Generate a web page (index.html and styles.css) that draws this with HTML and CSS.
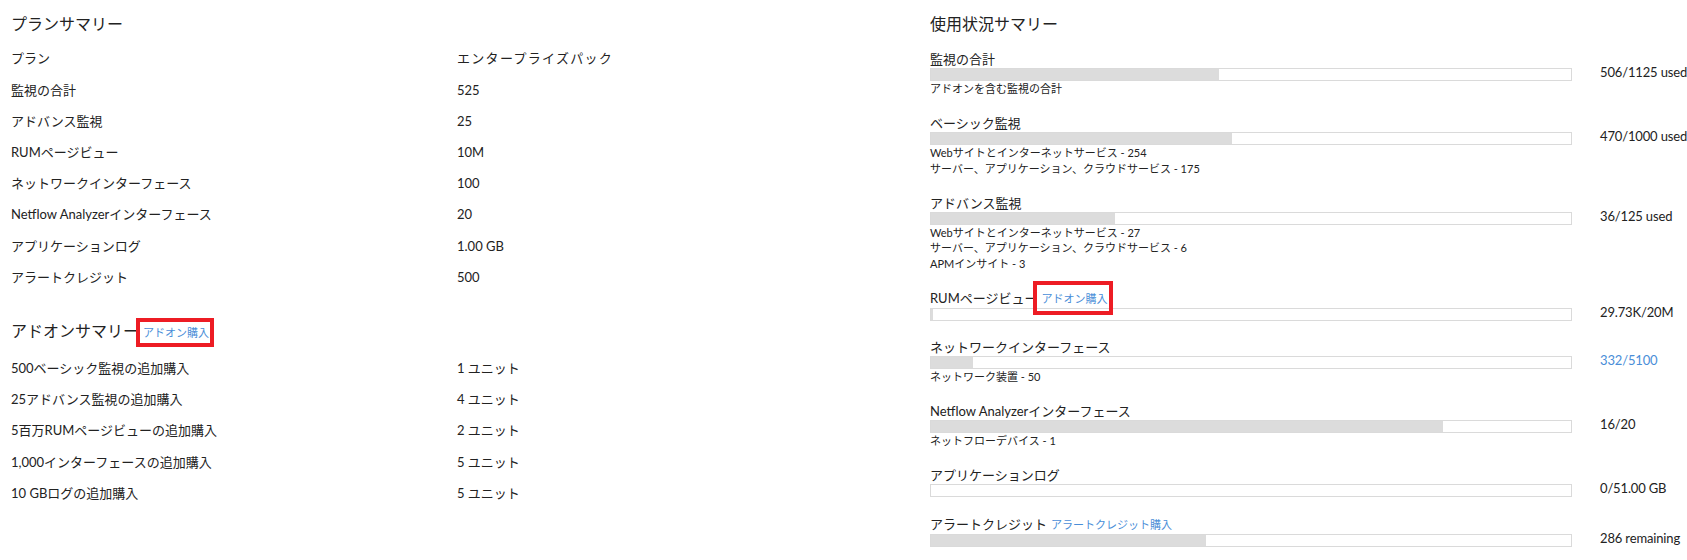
FILE: index.html
```html
<!DOCTYPE html>
<html lang="ja">
<head>
<meta charset="utf-8">
<title>サマリー</title>
<link rel="stylesheet" href="styles.css">
</head>
<body>
<div class="page">
  <section class="plan">
    <h2 class="sec-title">プランサマリー</h2>
    <div class="kv">
      <div class="kv-row"><span>プラン</span><span class="wide">エンタープライズパック</span></div>
      <div class="kv-row"><span>監視の合計</span><span>525</span></div>
      <div class="kv-row"><span>アドバンス監視</span><span>25</span></div>
      <div class="kv-row"><span>RUMページビュー</span><span>10M</span></div>
      <div class="kv-row"><span>ネットワークインターフェース</span><span>100</span></div>
      <div class="kv-row"><span>Netflow Analyzerインターフェース</span><span>20</span></div>
      <div class="kv-row"><span>アプリケーションログ</span><span>1.00 GB</span></div>
      <div class="kv-row"><span>アラートクレジット</span><span>500</span></div>
    </div>
    <h2 class="sec-title addon-title">アドオンサマリー<a class="buy-link marked marked-left">アドオン購入</a></h2>
    <div class="kv kv-addon">
      <div class="kv-row"><span>500ベーシック監視の追加購入</span><span>1 ユニット</span></div>
      <div class="kv-row"><span>25アドバンス監視の追加購入</span><span>4 ユニット</span></div>
      <div class="kv-row"><span>5百万RUMページビューの追加購入</span><span>2 ユニット</span></div>
      <div class="kv-row"><span>1,000インターフェースの追加購入</span><span>5 ユニット</span></div>
      <div class="kv-row"><span>10 GBログの追加購入</span><span>5 ユニット</span></div>
    </div>
  </section>

  <section class="usage">
    <h2 class="sec-title">使用状況サマリー</h2>
    <div class="u-list">
      <div class="u-item">
        <div class="u-title">監視の合計</div>
        <div class="bar"><div class="fill" style="width:44.98%"></div></div>
        <div class="u-value">506/1125 used</div>
        <div class="u-subs"><div>アドオンを含む監視の合計</div></div>
      </div>
      <div class="u-item">
        <div class="u-title">ベーシック監視</div>
        <div class="bar"><div class="fill" style="width:47%"></div></div>
        <div class="u-value">470/1000 used</div>
        <div class="u-subs">
          <div>Webサイトとインターネットサービス - 254</div>
          <div>サーバー、アプリケーション、クラウドサービス - 175</div>
        </div>
      </div>
      <div class="u-item">
        <div class="u-title">アドバンス監視</div>
        <div class="bar"><div class="fill" style="width:28.8%"></div></div>
        <div class="u-value">36/125 used</div>
        <div class="u-subs">
          <div>Webサイトとインターネットサービス - 27</div>
          <div>サーバー、アプリケーション、クラウドサービス - 6</div>
          <div>APMインサイト - 3</div>
        </div>
      </div>
      <div class="u-item">
        <div class="u-title">RUMページビュー<a class="buy-link marked marked-right">アドオン購入</a></div>
        <div class="bar"><div class="fill" style="width:0.25%"></div></div>
        <div class="u-value">29.73K/20M</div>
      </div>
      <div class="u-item">
        <div class="u-title">ネットワークインターフェース</div>
        <div class="bar"><div class="fill" style="width:6.5%"></div></div>
        <div class="u-value u-value-link">332/5100</div>
        <div class="u-subs"><div>ネットワーク装置 - 50</div></div>
      </div>
      <div class="u-item">
        <div class="u-title">Netflow Analyzerインターフェース</div>
        <div class="bar"><div class="fill" style="width:80%"></div></div>
        <div class="u-value">16/20</div>
        <div class="u-subs"><div>ネットフローデバイス - 1</div></div>
      </div>
      <div class="u-item">
        <div class="u-title">アプリケーションログ</div>
        <div class="bar"><div class="fill" style="width:0%"></div></div>
        <div class="u-value">0/51.00 GB</div>
      </div>
      <div class="u-item">
        <div class="u-title">アラートクレジット<a class="buy-link">アラートクレジット購入</a></div>
        <div class="bar"><div class="fill" style="width:43%"></div></div>
        <div class="u-value">286 remaining</div>
      </div>
    </div>
  </section>
</div>
</body>
</html>
```

FILE: styles.css
```css
html, body {
  margin: 0;
  padding: 0;
  background: #ffffff;
}

body {
  font-family: Lato, "Noto Sans CJK JP", sans-serif;
  color: #222222;
  font-size: 13px;
}

.page {
  display: grid;
  grid-template-columns: 919px 642px 1fr;
  padding-left: 11px;
}

.usage {
  grid-column: 2 / 4;
}

.sec-title {
  font-size: 16px;
  font-weight: normal;
  line-height: 22px;
  margin: 13px 0 0;
  color: #222222;
}

.kv {
  margin-top: 8.4px;
}

.kv-row {
  display: grid;
  grid-template-columns: 446px 1fr;
  font-size: 13px;
  line-height: 17px;
  padding: 7.1px 0;
}

.wide {
  letter-spacing: 1.3px;
}

.addon-title {
  margin-top: 27px;
}

.kv-addon {
  margin-top: 9px;
}

.buy-link {
  font-size: 11px;
  color: #4a8ed8;
  margin-left: 4px;
  cursor: pointer;
}

.marked {
  position: relative;
}

.marked::after {
  content: "";
  position: absolute;
  border: 4px solid #ed1c24;
}

.marked-left::after {
  left: -7px;
  right: -5px;
  top: -8px;
  bottom: -8px;
}

.marked-right::after {
  left: -8px;
  right: -6px;
  top: -11px;
  bottom: -10px;
}

.u-list {
  display: flex;
  flex-direction: column;
  gap: 17.5px;
  margin-top: 15px;
}

.u-item {
  display: grid;
  grid-template-columns: 642px 1fr;
  column-gap: 28px;
}

.u-title {
  grid-column: 1;
  grid-row: 1;
  font-size: 13px;
  line-height: 18px;
  white-space: nowrap;
}

.bar {
  grid-column: 1;
  grid-row: 2;
  height: 13px;
  box-sizing: border-box;
  border: 1px solid #dadada;
  background: #ffffff;
}

.fill {
  height: 100%;
  background: #dcdcdc;
}

.u-value {
  grid-column: 2;
  grid-row: 2;
  align-self: start;
  font-size: 13px;
  line-height: 12px;
  margin-top: -2px;
  white-space: nowrap;
  letter-spacing: -0.15px;
}

.u-value-link {
  color: #4a8ed8;
}

.u-subs {
  grid-column: 1;
  grid-row: 3;
  font-size: 11px;
  line-height: 15.5px;
}
```
